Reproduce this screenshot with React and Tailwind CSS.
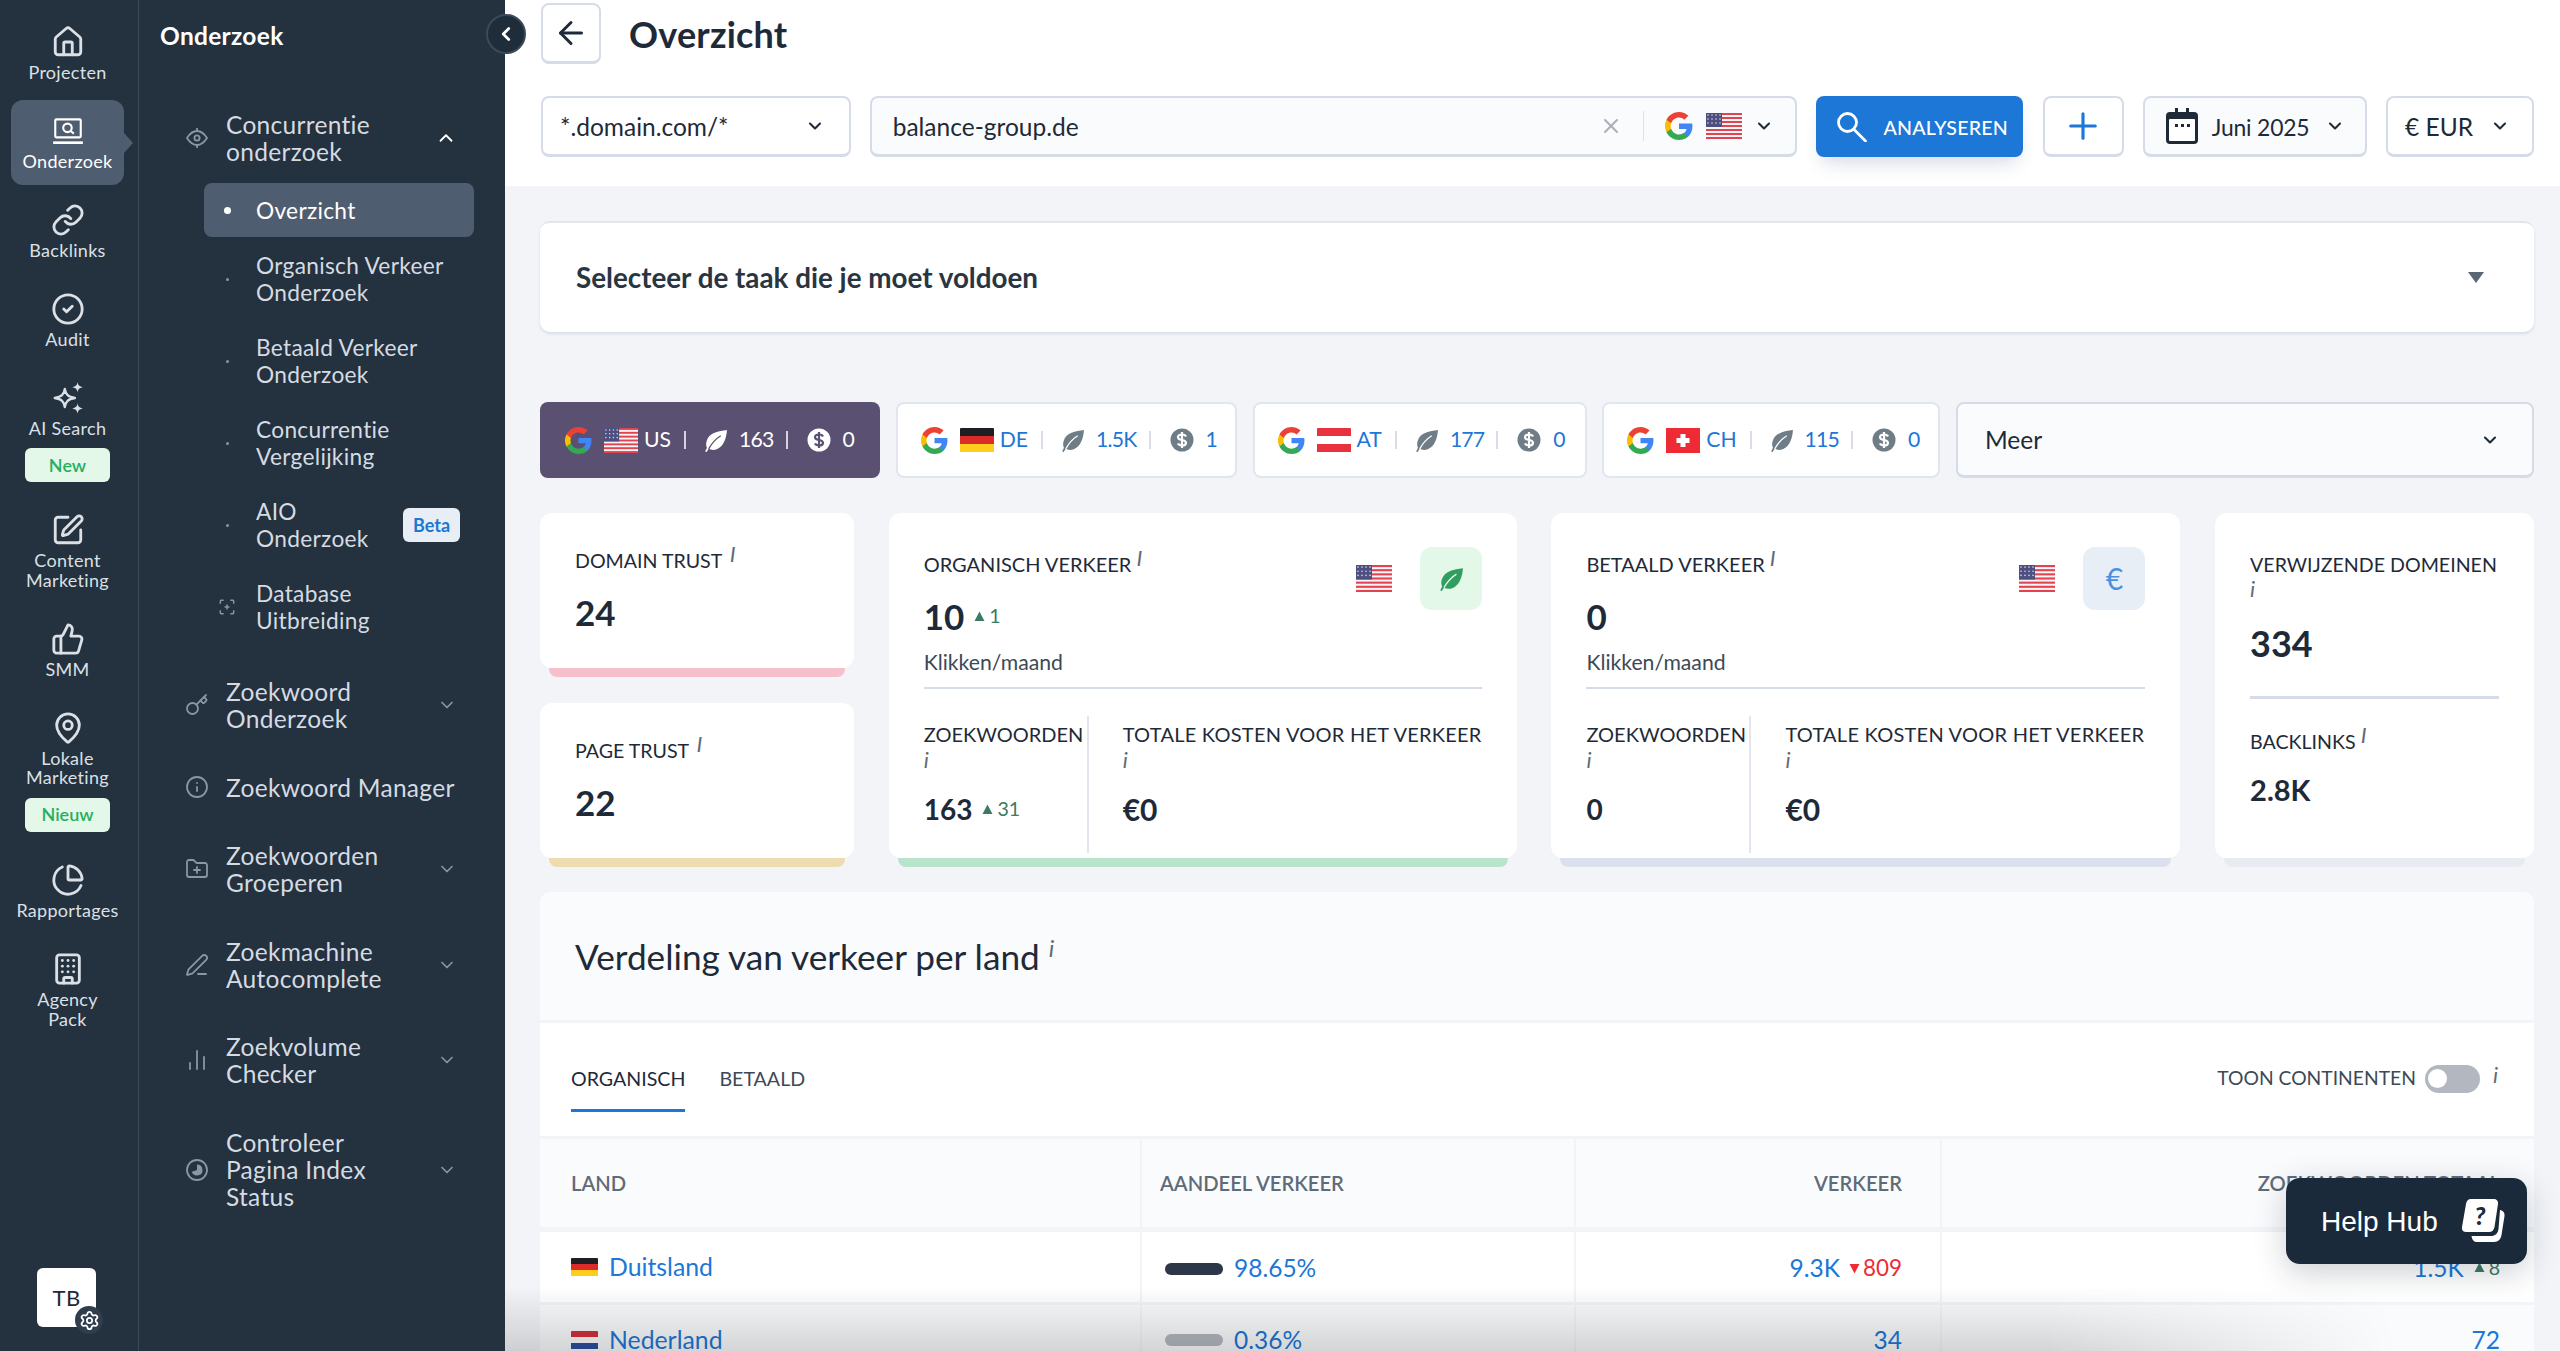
import React from 'react';
import {
  House, Link, CircleCheck, SquarePen, ThumbsUp, MapPin, ChartPie, Building, Key, Info, FolderPlus, PenLine,
  ChartNoAxesColumn, ChevronUp, ChevronDown, ChevronLeft, ArrowLeft, X, Plus, Settings,
} from 'lucide-react';

const GoogleG = ({ className }) => (
  <svg viewBox="1 1 22 22" className={className}>
    <path fill="#4285F4" d="M22.56 12.25c0-.78-.07-1.53-.2-2.25H12v4.26h5.92c-.26 1.37-1.04 2.53-2.21 3.31v2.77h3.57c2.08-1.92 3.28-4.74 3.28-8.09z" />
    <path fill="#34A853" d="M12 23c2.97 0 5.46-.98 7.28-2.66l-3.57-2.77c-.98.66-2.23 1.06-3.71 1.06-2.86 0-5.29-1.93-6.16-4.53H2.18v2.84C3.99 20.53 7.7 23 12 23z" />
    <path fill="#FBBC05" d="M5.84 14.09c-.22-.66-.35-1.36-.35-2.09s.13-1.43.35-2.09V7.07H2.18C1.43 8.55 1 10.22 1 12s.43 3.45 1.18 4.93l3.66-2.84z" />
    <path fill="#EA4335" d="M12 5.38c1.62 0 3.06.56 4.21 1.64l3.15-3.15C17.45 2.09 14.97 1 12 1 7.7 1 3.99 3.47 2.18 7.07l3.66 2.84c.87-2.6 3.3-4.53 6.16-4.53z" />
  </svg>
);

const FlagUS = ({ className }) => (
  <svg viewBox="0 0 36 26" preserveAspectRatio="none" className={className}>
    <rect width="36" height="26" fill="#f5f5f7" />
    {[0, 4, 8, 12, 16, 20, 24].map((y) => <rect key={y} y={y} width="36" height="2" fill="#e2434f" />)}
    <rect width="16" height="14" fill="#4c4f80" />
    {[2, 6, 10].map((y) => [2, 6, 10, 14].map((x) => <circle key={x + '-' + y} cx={x} cy={y} r="0.8" fill="#d7d8e6" />))}
  </svg>
);

const FlagBars = ({ colors, className }) => (
  <div className={'flex flex-col overflow-hidden rounded-[1px] ' + className}>
    {colors.map((c) => <div key={c} className="flex-1" style={{ backgroundColor: c }} />)}
  </div>
);

const FlagCH = ({ className }) => (
  <svg viewBox="0 0 34 25" preserveAspectRatio="none" className={className}>
    <rect width="34" height="25" fill="#ee2a35" />
    <rect x="14.5" y="6" width="5" height="13" fill="#fff" />
    <rect x="10.5" y="10" width="13" height="5" fill="#fff" />
  </svg>
);

const Leaf = ({ className, fill = '#6f7d87', vein = '#fff' }) => (
  <svg viewBox="0 0 24 24" className={className}>
    <path fill={fill} d="M23 2C15 3 6 4.500 3.500 12.500c-.8 2.700-.5 4.900.3 6.500L2 22.500l1.500.5 2-3c2.200 1.300 5.200 1.500 8.200.2C19.500 17.700 22.500 10.500 23 2z" />
    <path fill="none" stroke={vein} strokeWidth="1.2" d="M5.500 20C8 15.500 11.500 11 17 7.500" />
  </svg>
);

const DollarCircle = ({ className, fill = '#6f7d87', ink = '#fff' }) => (
  <svg viewBox="0 0 24 24" className={className}>
    <circle cx="12" cy="12" r="11.5" fill={fill} />
    <path fill="none" stroke={ink} strokeWidth="2.2" d="M16 8.500C15.400 7 13.800 6.500 12 6.500c-2.200 0-4 1-4 2.800C8 13.300 16 10.700 16 14.700c0 1.800-1.800 2.800-4 2.800-1.800 0-3.400-.6-4-2.100M12 4v16" />
  </svg>
);

const LaptopSearch = (props) => (
  <svg viewBox="0 0 32 32" fill="none" stroke="currentColor" strokeWidth="2" {...props}>
    <rect x="4" y="5" width="24" height="17" rx="1" />
    <path d="M2 27h28" strokeWidth="2.5" />
    <circle cx="15.5" cy="13" r="4" />
    <path d="M18.500 16l3 2.500" />
  </svg>
);

const Sparkle = (props) => (
  <svg viewBox="0 0 32 32" fill="none" stroke="currentColor" strokeWidth="2.2" {...props}>
    <path d="M13 7.500c1 5.500 2.800 7.300 9.500 8.500-6.700 1.200-8.500 3-9.500 8.500-1-5.500-2.800-7.300-9.500-8.500C10.200 14.800 12 13 13 7.500z" strokeLinejoin="round" />
    <path fill="currentColor" stroke="none" d="M25 1c.6 3.200 1.500 4.100 5 4.800-3.500.7-4.400 1.600-5 4.800-.6-3.200-1.500-4.100-5-4.800 3.500-.7 4.400-1.600 5-4.800zM25 21c.6 3.200 1.500 4.100 5 4.800-3.500.7-4.400 1.600-5 4.800-.6-3.200-1.500-4.100-5-4.800 3.500-.7 4.400-1.600 5-4.800z" />
  </svg>
);

const EyeTarget = (props) => (
  <svg viewBox="0 0 24 24" fill="none" stroke="currentColor" strokeWidth="1.8" {...props}>
    <path d="M2 12c3-4.700 6.300-7 10-7s7 2.300 10 7c-3 4.700-6.300 7-10 7s-7-2.300-10-7z" />
    <circle cx="12" cy="12" r="2.6" />
    <path d="M12 2v3M12 19v3" />
  </svg>
);

const ScanPlus = (props) => (
  <svg viewBox="0 0 24 24" fill="none" stroke="currentColor" strokeWidth="1.8" {...props}>
    <path d="M4 8V5a1 1 0 0 1 1-1h3M16 4h3a1 1 0 0 1 1 1v3M20 16v3a1 1 0 0 1-1 1h-3M8 20H5a1 1 0 0 1-1-1v-3M12 9v6M9 12h6" />
  </svg>
);

const PieRing = (props) => (
  <svg viewBox="0 0 24 24" fill="none" stroke="currentColor" strokeWidth="1.8" {...props}>
    <circle cx="12" cy="12" r="10" />
    <path fill="currentColor" stroke="none" d="M12 6.500a5.500 5.500 0 1 1-5.200 7.300L12 12z" />
  </svg>
);

const railItems = [
  { label: ['Projecten'], icon: House },
  { label: ['Onderzoek'], icon: LaptopSearch, active: true },
  { label: ['Backlinks'], icon: Link },
  { label: ['Audit'], icon: CircleCheck },
  { label: ['AI Search'], icon: Sparkle, badge: 'New' },
  { label: ['Content', 'Marketing'], icon: SquarePen },
  { label: ['SMM'], icon: ThumbsUp },
  { label: ['Lokale', 'Marketing'], icon: MapPin, badge: 'Nieuw' },
  { label: ['Rapportages'], icon: ChartPie },
  { label: ['Agency', 'Pack'], icon: Building },
];

function Rail() {
  return (
    <aside className="w-[139px] shrink-0 flex flex-col items-start border-r border-[#3b4a5a] bg-[#24313e] pt-[11px] pl-[11px]">
      <div className="flex flex-col gap-[3.4px]">
        {railItems.map((item) => {
          const Icon = item.icon;
          return (
            <div
              key={item.label[0]}
              className={'relative w-[113px] rounded-[12px] pt-[14px] pb-[14px] flex flex-col items-center ' + (item.active ? 'bg-[#4f5d70] text-white' : 'text-[#dbe0e6]')}
            >
              <Icon className="w-[34px] h-[34px]" />
              <div className="mt-[4px] text-[18px] leading-[19.5px] text-center tracking-[0.3px]">
                {item.label.map((l) => <div key={l}>{l}</div>)}
              </div>
              {item.badge && (
                <div className="mt-[10px] w-[85px] h-[34px] rounded-[6px] bg-[#e3f8e9] text-[#27ae60] text-[18px] font-semibold flex items-center justify-center">{item.badge}</div>
              )}
              {item.active && <div className="absolute right-[-9px] top-[33px] w-0 h-0 border-y-[10px] border-y-transparent border-l-[9px] border-l-[#4f5d70]" />}
            </div>
          );
        })}
      </div>
      <div className="mt-auto mb-[24px] ml-[26px] relative w-[59px] h-[59px] rounded-[6px] bg-white flex items-center justify-center text-[#1e2a38] text-[22px] tracking-[0.5px]">
        TB
        <div className="absolute left-[38px] top-[38px] w-[28px] h-[28px] rounded-full bg-[#2f3d4d] flex items-center justify-center">
          <Settings className="w-[21px] h-[21px] text-white" />
        </div>
      </div>
    </aside>
  );
}

const subItems = [
  { lines: ['Organisch Verkeer', 'Onderzoek'] },
  { lines: ['Betaald Verkeer', 'Onderzoek'] },
  { lines: ['Concurrentie', 'Vergelijking'] },
  { lines: ['AIO', 'Onderzoek'], beta: true },
  { lines: ['Database', 'Uitbreiding'], scan: true },
];

const groups = [
  { lines: ['Zoekwoord', 'Onderzoek'], icon: Key, chevron: true },
  { lines: ['Zoekwoord Manager'], icon: Info },
  { lines: ['Zoekwoorden', 'Groeperen'], icon: FolderPlus, chevron: true },
  { lines: ['Zoekmachine', 'Autocomplete'], icon: PenLine, chevron: true },
  { lines: ['Zoekvolume', 'Checker'], icon: ChartNoAxesColumn, chevron: true },
  { lines: ['Controleer', 'Pagina Index', 'Status'], icon: PieRing, chevron: true },
];

function Panel() {
  return (
    <aside className="w-[366px] shrink-0 bg-[#24313e] text-[24.5px] leading-[27.2px] text-[#d5dbe2] tracking-[0.3px]">
      <div className="h-[72px] pl-[21px] flex items-center text-white font-bold">Onderzoek</div>
      <div className="mt-[19.5px] pl-[46px] pr-[48px] pt-[19.5px] pb-[18px] flex items-center">
        <EyeTarget className="w-6 h-6 shrink-0 text-[#8a96a3]" />
        <div className="ml-[17px] flex-1">Concurrentie<br />onderzoek</div>
        <ChevronUp className="w-[22px] h-[22px] text-white" />
      </div>
      <div className="ml-[65px] w-[270px] h-[54px] rounded-[8px] bg-[#4f5d70] flex items-center text-white text-[22.7px]">
        <div className="w-[46px] flex justify-center"><div className="w-[7px] h-[7px] rounded-full bg-white" /></div>
        <div className="ml-[6px]">Overzicht</div>
      </div>
      <div className="mt-[1px] text-[22.7px]">
        {subItems.map((s) => (
          <div key={s.lines[0]} className="ml-[65px] w-[270px] h-[82px] flex items-center">
            <div className="w-[46px] flex justify-center text-[#8a96a3]">
              {s.scan ? <ScanPlus className="w-[20px] h-[20px]" /> : <div className="w-[3px] h-[3px] rounded-full bg-[#8a96a3]" />}
            </div>
            <div className="ml-[6px] flex-1">{s.lines[0]}<br />{s.lines[1]}</div>
            {s.beta && <div className="mr-[14px] w-[57px] h-[34px] rounded-[6px] bg-[#e8eef5] text-[#1c77d6] text-[18px] font-bold flex items-center justify-center tracking-normal">Beta</div>}
          </div>
        ))}
      </div>
      <div className="mt-[9px]">
        {groups.map((g) => {
          const Icon = g.icon;
          return (
            <div key={g.lines[0]} className="pl-[46px] pr-[48px] py-[20.6px] flex items-center">
              <Icon className="w-6 h-6 shrink-0 text-[#8a96a3]" strokeWidth={1.8} />
              <div className="ml-[17px] flex-1 whitespace-nowrap">{g.lines.map((l) => <div key={l}>{l}</div>)}</div>
              {g.chevron && <ChevronDown className="w-[20px] h-[20px] text-[#8a96a3]" />}
            </div>
          );
        })}
      </div>
    </aside>
  );
}

const boxBorder = 'border-2 border-b-[3px] border-[#d5dbe7] rounded-[8px]';

function Header() {
  return (
    <header className="h-[186px] shrink-0 bg-white pl-[36px] pr-[26px] pt-[3px]">
      <div className="flex items-center h-[61px]">
        <div className={'w-[60px] h-[61px] flex items-center justify-center text-[#1e2a38] ' + boxBorder}>
          <ArrowLeft className="w-[36px] h-[36px]" strokeWidth={2} />
        </div>
        <h1 className="ml-[28px] text-[36px] font-bold text-[#1e2a38] tracking-[0.2px]">Overzicht</h1>
      </div>
      <div className="mt-[32px] flex gap-[19.2px] h-[61px] text-[24.5px] text-[#1e2a38]">
        <div className={'w-[309.5px] bg-white pl-[17px] pr-[24px] flex items-center justify-between ' + boxBorder}>
          <span className="pt-[2px]">*.domain.com/*</span>
          <ChevronDown className="w-[20px] h-[20px]" strokeWidth={2.5} />
        </div>
        <div className={'flex-1 bg-[#fafbfd] pl-[21px] pr-[21px] flex items-center ' + boxBorder}>
          <span className="flex-1 pt-[2px]">balance-group.de</span>
          <X className="w-[24px] h-[24px] text-[#a8aeb6]" />
          <div className="ml-[20px] w-px h-[30px] bg-[#dfe3e9]" />
          <GoogleG className="ml-[21px] w-[28px] h-[28px]" />
          <FlagUS className="ml-[13px] w-[36px] h-[26px]" />
          <ChevronDown className="ml-[12px] w-[20px] h-[20px]" strokeWidth={2.5} />
        </div>
        <div className="w-[207px] rounded-[8px] bg-[#1c77d6] shadow-[0_12px_18px_-6px_rgba(30,60,120,0.18)] pl-[21px] flex items-center text-white">
          <svg viewBox="0 0 30 30" fill="none" stroke="currentColor" strokeWidth="2.8" strokeLinecap="round" className="w-[30px] h-[30px]">
            <circle cx="10.5" cy="10.5" r="9" />
            <path d="M17 17.500L28.500 29" />
          </svg>
          <span className="ml-[16px] text-[19.6px] font-medium tracking-[0.2px] pt-[2px]">ANALYSEREN</span>
        </div>
        <div className={'w-[81px] flex items-center justify-center text-[#1c77d6] ' + boxBorder}>
          <Plus className="w-[42px] h-[42px]" strokeWidth={1.8} />
        </div>
        <div className={'w-[224px] bg-[#fafbfd] pl-[21px] flex items-center ' + boxBorder}>
          <svg viewBox="0 0 32 36" className="w-[32px] h-[36px]">
            <path fill="#1e2a38" d="M4 4h5V0h3v4h8V0h3v4h5a4 4 0 0 1 4 4v24a4 4 0 0 1-4 4H4a4 4 0 0 1-4-4V8a4 4 0 0 1 4-4z" />
            <rect x="3" y="11" width="26" height="22" rx="1" fill="#fff" />
            <path fill="#1e2a38" d="M9 16h3v3H9zM15 16h3v3h-3zM21 16h3v3h-3z" />
          </svg>
          <span className="ml-[14px] text-[22.9px] tracking-[-0.2px] pt-[2px]">Juni 2025</span>
          <ChevronDown className="ml-[16px] w-[20px] h-[20px]" strokeWidth={2.5} />
        </div>
        <div className={'w-[148px] pl-[17px] flex items-center ' + boxBorder}>
          <span className="pt-[2px]">€ EUR</span>
          <ChevronDown className="ml-[17px] w-[20px] h-[20px]" strokeWidth={2.5} />
        </div>
      </div>
    </header>
  );
}

const tabs = [
  { code: 'US', org: '163', paid: '0', active: true, w: 'w-[340px]' },
  { code: 'DE', org: '1.5K', paid: '1', w: 'w-[341px]' },
  { code: 'AT', org: '177', paid: '0', w: 'w-[334px]' },
  { code: 'CH', org: '115', paid: '0', w: 'w-[338px]' },
];

function TabFlag({ code }) {
  const cls = 'ml-[12px] w-[34px] h-[25px] shrink-0';
  if (code === 'US') return <FlagUS className={cls} />;
  if (code === 'CH') return <FlagCH className={cls} />;
  if (code === 'DE') return <FlagBars className={cls} colors={['#1f1f23', '#dd2b2b', '#ffcd1c']} />;
  return <FlagBars className={cls} colors={['#e8323f', '#ffffff', '#e8323e']} />;
}

function CountryTab({ code, org, paid, active, w }) {
  const txt = active ? 'text-white' : 'text-[#1c77d6]';
  const sep = 'w-[2px] h-[18px] shrink-0 ' + (active ? 'bg-[#d5d3e2]' : 'bg-[#d9dee6]');
  const base = active ? 'bg-[#5a5072] pl-[25px]' : 'bg-white border-2 border-[#e1e5ed] pl-[23px]';
  return (
    <div className={w + ' h-[76px] rounded-[8px] flex items-center text-[21.2px] ' + base + ' ' + txt}>
      <GoogleG className="w-[27px] h-[27px] shrink-0" />
      <TabFlag code={code} />
      <span className="ml-[6px]">{code}</span>
      <div className={'ml-[13px] ' + sep} />
      <Leaf className="ml-[17px] w-[25px] h-[25px] shrink-0" fill={active ? '#fff' : '#6f7d87'} vein={active ? '#5a5072' : '#fff'} />
      <span className="ml-[11px] tracking-[-0.8px]">{org}</span>
      <div className={'ml-[12px] ' + sep} />
      <DollarCircle className="ml-[19px] w-[24px] h-[24px] shrink-0" fill={active ? '#fff' : '#6f7d87'} ink={active ? '#5a5072' : '#fff'} />
      <span className="ml-[12px]">{paid}</span>
    </div>
  );
}

const InfoMark = ({ className = '' }) => (
  <span className={'italic text-[#5f6b78] text-[22px] leading-none ' + className}>i</span>
);

const Up = ({ value }) => (
  <span className="ml-[10px] inline-flex items-center text-[19.6px] font-normal text-[#3c7a63]">
    <svg viewBox="0 0 10 10" className="w-[11px] h-[11px] mr-[4px]"><path fill="#3c7a63" d="M5 .5 9.500 9h-9z" /></svg>
    {value}
  </span>
);

function StatCard({ strip, className = '', children }) {
  return (
    <div className={'flex flex-col ' + className}>
      <div className="flex-1 rounded-[12px] bg-white">{children}</div>
      <div className={'mx-[9px] h-[9px] rounded-b-[8px] ' + strip} />
    </div>
  );
}

function TrustCard({ title, value, strip }) {
  return (
    <StatCard strip={strip} className="h-[164px]">
      <div className="pl-[35px] pt-[36px]">
        <div className="text-[19.6px] leading-[24px] text-[#1e2a38] uppercase">{title} <InfoMark className="relative -top-[6px] ml-[3px]" /></div>
        <div className="mt-[18px] text-[35px] leading-[42px] font-bold text-[#1e2a38]">{value}</div>
      </div>
    </StatCard>
  );
}

function TrafficCard({ title, value, delta, keywords, kwDelta, strip, className, badge }) {
  return (
    <StatCard strip={strip} className={className}>
      <div className="px-[35px] pt-[33px]">
        <div className="flex justify-between">
          <div className="pt-[6px] text-[#1e2a38]">
            <div className="text-[20px] leading-[24px] uppercase">{title} <InfoMark className="relative -top-[6px]" /></div>
            <div className="mt-[19px] text-[35px] leading-[42px] font-bold flex items-center">{value}{delta && <Up value={delta} />}</div>
            <div className="mt-[11px] text-[21.2px] leading-[28px] text-[#3d4956]">Klikken/maand</div>
          </div>
          <div className="flex items-start pt-[1px]">
            <FlagUS className="mt-[18px] w-[36px] h-[27px]" />
            {badge}
          </div>
        </div>
        <div className="mt-[11px] h-[2px] bg-[#d5dbe7]" />
        <div className="mt-[27px] flex h-[137px] text-[#1e2a38]">
          <div className="w-[165px] border-r-2 border-[#e1e5ed] pt-[6px]">
            <div className="text-[20px] leading-[24px] uppercase whitespace-nowrap">Zoekwoorden</div>
            <div className="mt-[3px] leading-[24px]"><InfoMark /></div>
            <div className="mt-[19px] text-[28px] leading-[32px] font-bold flex items-center">{keywords}{kwDelta && <Up value={kwDelta} />}</div>
          </div>
          <div className="pl-[34px] pt-[6px]">
            <div className="text-[20px] tracking-[0.25px] leading-[24px] uppercase whitespace-nowrap">Totale kosten voor het verkeer</div>
            <div className="mt-[3px] leading-[24px]"><InfoMark /></div>
            <div className="mt-[19px] text-[30px] leading-[32px] font-bold">€0</div>
          </div>
        </div>
      </div>
    </StatCard>
  );
}

function Stats() {
  return (
    <div className="mt-[35px] flex gap-[34.7px]">
      <div className="w-[314px] flex flex-col gap-[26px]">
        <TrustCard title="Domain Trust" value="24" strip="bg-[#f5c0cc]" />
        <TrustCard title="Page Trust" value="22" strip="bg-[#ecdcb0]" />
      </div>
      <TrafficCard
        title="Organisch Verkeer" value="10" delta="1" keywords="163" kwDelta="31"
        strip="bg-[#b8e4cc]" className="w-[628px] h-[354px]"
        badge={<div className="ml-[28px] w-[62px] h-[63px] rounded-[12px] bg-[#e3f8e9] flex items-center justify-center"><Leaf className="w-[26px] h-[26px]" fill="#2f9e5f" vein="#e3f8e9" /></div>}
      />
      <TrafficCard
        title="Betaald Verkeer" value="0" keywords="0"
        strip="bg-[#dbe1ec]" className="w-[629px] h-[354px]"
        badge={<div className="ml-[28px] w-[62px] h-[63px] rounded-[12px] bg-[#e8eef5] flex items-center justify-center text-[#4a90e2] text-[30px]">€</div>}
      />
      <StatCard strip="bg-[#e8ebf1]" className="flex-1 h-[354px]">
        <div className="px-[35px] pt-[40px] text-[#1e2a38]">
          <div className="text-[19.6px] leading-[24px] uppercase whitespace-nowrap">Verwijzende domeinen</div>
          <div className="mt-[1px] leading-[24px]"><InfoMark /></div>
          <div className="mt-[19px] text-[36px] leading-[42px] font-bold">334</div>
          <div className="mt-[32px] h-[3px] bg-[#d5dbe7]" />
          <div className="mt-[31px] text-[19.6px] leading-[24px] uppercase">Backlinks <InfoMark className="relative -top-[6px]" /></div>
          <div className="mt-[18px] text-[29px] leading-[36px] font-bold">2.8K</div>
        </div>
      </StatCard>
    </div>
  );
}

const cellCols = 'grid grid-cols-[600px_432px_364px_1fr] gap-x-[2px]';

function CountrySection() {
  return (
    <section className="mt-[25px] flex flex-col gap-[3px] rounded-t-[10px] overflow-hidden">
      <div className="h-[128px] bg-[#fafbfd] pl-[35px] pt-[38.5px] text-[35.2px] leading-[50px] text-[#1e2a38]">
        Verdeling van verkeer per land <InfoMark className="relative -top-[13px] text-[24px]" />
      </div>
      <div className="h-[113px] bg-white pl-[31px] pr-[36px] pb-[2px] flex items-center text-[19.6px] text-[#3d4956]">
        <div className="h-full flex items-center relative text-[#1e2a38]">
          ORGANISCH
          <div className="absolute left-0 right-0 top-[86px] h-[3px] bg-[#1c77d6]" />
        </div>
        <div className="ml-[34px]">BETAALD</div>
        <div className="ml-auto text-[19.3px]">TOON CONTINENTEN</div>
        <div className="ml-[9px] w-[55px] h-[28px] rounded-full bg-[#b3b7bf] flex items-center pl-[3px]"><div className="w-[19px] h-[19px] rounded-full bg-white" /></div>
        <InfoMark className="ml-[13px] mb-[8px]" />
      </div>
      <div className={cellCols + ' h-[90px] pb-[2px] text-[20.2px] font-semibold text-[#5f6b78]'}>
        <div className="bg-[#fafbfd] pl-[31px] flex items-center">LAND</div>
        <div className="bg-[#fafbfd] pl-[18px] flex items-center">AANDEEL VERKEER</div>
        <div className="bg-[#fafbfd] pr-[38px] flex items-center justify-end">VERKEER</div>
        <div className="bg-[#fafbfd] pr-[34px] flex items-center justify-end">ZOEKWOORDEN TOTAAL</div>
      </div>
      <div className={cellCols + ' h-[70px] text-[24.5px] text-[#1c77d6]'}>
        <div className="bg-white pl-[31px] flex items-center"><FlagBars className="w-[27px] h-[19px] mr-[11px]" colors={['#1f1f23', '#dd2b2b', '#ffcd1c']} /><span className="text-[24.8px]">Duitsland</span></div>
        <div className="bg-white pl-[23px] pt-[3px] flex items-center"><div className="w-[58px] h-[12px] rounded-full bg-[#2d3748] mr-[11px]" />98.65%</div>
        <div className="bg-white pr-[38px] pt-[2px] flex items-center justify-end">9.3K
          <svg viewBox="0 0 10 10" className="ml-[9px] mr-[3px] w-[11px] h-[11px]"><path fill="#ee2a35" d="M5 9.500.5 1h9z" /></svg>
          <span className="text-[22.4px] text-[#ee2a35]">809</span></div>
        <div className="bg-white pr-[34px] pt-[2px] flex items-center justify-end">1.5K<Up value="8" /></div>
      </div>
      <div className={cellCols + ' h-[70px] text-[24.5px] text-[#1c77d6]'}>
        <div className="bg-[#fafbfd] pl-[31px] flex items-center"><FlagBars className="w-[27px] h-[19px] mr-[11px]" colors={['#d5303a', '#fafbfd', '#2d4f9e']} /><span className="text-[24.8px]">Nederland</span></div>
        <div className="bg-[#fafbfd] pl-[23px] flex items-center"><div className="w-[58px] h-[12px] rounded-full bg-[#b3b7bf] mr-[11px]" />0.36%</div>
        <div className="bg-[#fafbfd] pr-[38px] flex items-center justify-end">34</div>
        <div className="bg-[#fafbfd] pr-[34px] flex items-center justify-end">72</div>
      </div>
    </section>
  );
}

function HelpHub() {
  return (
    <div className="absolute right-[33px] bottom-[87px] w-[241px] h-[86px] rounded-[14px] bg-[#1b2a3a] shadow-[0_8px_32px_rgba(20,30,50,0.22)] flex items-center pl-[35px] text-white text-[28px] font-['Liberation_Sans',sans-serif]">
      <span className="pt-[2px]">Help Hub</span>
      <svg viewBox="0 0 44 44" className="ml-[24px] w-[44px] h-[44px] shrink-0">
        <path fill="#fff" d="M38 11c3 .5 5 3 4.500 6l-3 19c-.7 4-3 7-7.500 7H15c-3 0-5-2-5.500-6H29c4 0 7-2.500 7.500-7z" />
        <path fill="#fff" d="M9 0h23c2.800 0 4.500 2.200 4 5l-3.500 23c-.5 3-2.500 5-5.500 5H4c-2.800 0-4.500-2-4-5L4 5C4.500 2 6 0 9 0z" />
        <text x="18" y="26" textAnchor="middle" fontFamily="Lato, sans-serif" fontStyle="italic" fontWeight="900" fontSize="25" fill="#1b2a3a">?</text>
      </svg>
    </div>
  );
}

export default function App() {
  return (
    <div className="relative flex w-[2560px] h-[1351px] overflow-hidden font-['Lato',sans-serif] bg-[#f2f4f8]">
      <Rail />
      <Panel />
      <main className="relative flex-1 flex flex-col min-w-0 bg-[#f2f4f8]">
        <Header />
        <div className="pl-[35px] pr-[26px] pt-[35px]">
          <div className="h-[111px] rounded-[10px] bg-white border-t-2 border-[#e1e5ed] shadow-[0_2px_3px_rgba(40,60,100,0.12)] pl-[36px] pr-[50px] flex items-center justify-between">
            <div className="text-[27.8px] font-bold text-[#2a3542]">Selecteer de taak die je moet voldoen</div>
            <div className="w-0 h-0 border-x-[8px] border-x-transparent border-t-[11px] border-t-[#5b6673]" />
          </div>
          <div className="mt-[70px] flex justify-between">
            {tabs.map((t) => <CountryTab key={t.code} {...t} />)}
            <div className={'w-[578px] h-[76px] bg-[#fafbfd] pl-[27px] pr-[32px] flex items-center justify-between text-[24.5px] text-[#1e2a38] ' + boxBorder}>
              <span className="pt-[2px]">Meer</span> <ChevronDown className="w-[20px] h-[20px]" strokeWidth={2.5} />
            </div>
          </div>
          <Stats />
          <CountrySection />
        </div>
        <div className="pointer-events-none absolute inset-x-0 bottom-0 h-[65px] bg-gradient-to-t from-[#00000026] to-transparent [mask-image:linear-gradient(to_right,black_75%,transparent_92%)]" />
        <HelpHub />
      </main>
      <div className="absolute left-[486px] top-[14px] w-[40px] h-[40px] rounded-full bg-[#1f2d3a] border-2 border-[#3b4a5a] flex items-center justify-center text-white">
        <ChevronLeft className="w-[22px] h-[22px]" strokeWidth={3} />
      </div>
    </div>
  );
}
